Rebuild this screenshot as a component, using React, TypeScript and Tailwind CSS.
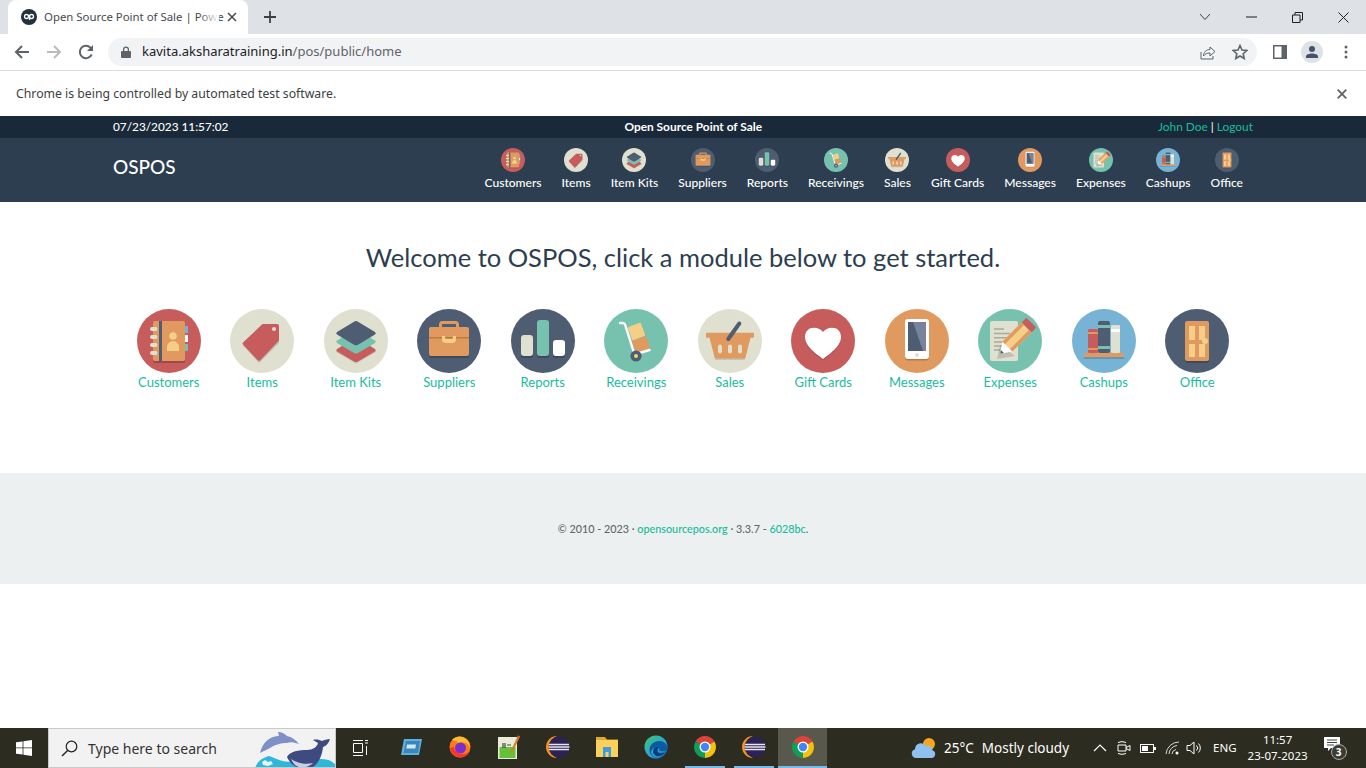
import React from "react";

const R = "#c65c5c", C = "#e0e0d1", N = "#4f5d73", G = "#76c2af", O = "#e0995e", Y = "#f5cf87", B = "#77b3d4", W = "#ffffff";

function Art({ name }: { name: string }) {
  switch (name) {
    case "Customers":
      return (<>
        <circle cx="32" cy="32" r="32" fill={R} />
        <rect x="16" y="14" width="32" height="40" rx="2" fill="#000" opacity=".2" />
        <rect x="48" y="17" width="3" height="7" fill={B} /><rect x="48" y="26" width="3" height="7" fill={W} /><rect x="48" y="35" width="3" height="7" fill={G} />
        <rect x="16" y="12" width="32" height="40" rx="2" fill={O} />
        <rect x="22" y="12" width="3" height="40" fill={N} />
        {[20, 28, 36, 44].map((y) => <rect key={y} x="13" y={y - 2} width="7.5" height="4" rx="2" fill={C} />)}
        <circle cx="36" cy="27" r="3.8" fill={Y} />
        <path d="M30 42v-4a6 6 0 0 1 12 0v4z" fill={Y} />
      </>);
    case "Items":
      return (<>
        <circle cx="32" cy="32" r="32" fill={C} />
        <path d="M31.7 17H49v17L29 54 12.7 36.3z" fill="#000" opacity=".15" />
        <path d="M32.5 15H47a2 2 0 0 1 2 2v14.5L30.5 51a2 2 0 0 1-3 0L13.5 36a2 2 0 0 1 0-3z" fill={R} />
        <circle cx="44" cy="20" r="2" fill={C} />
      </>);
    case "Item Kits":
      return (<>
        <circle cx="32" cy="32" r="32" fill={C} />
        <path d="M32 23 52 43 32 55 12 43z" fill="#000" opacity=".1" />
        <path d="M30 29.5a4 4 0 0 1 4 0l17 10.5a1.5 1.5 0 0 1 0 2.4L34 52.5a4 4 0 0 1-4 0L13 42.4a1.5 1.5 0 0 1 0-2.4z" fill={R} />
        <path d="M30 21a4 4 0 0 1 4 0l17 10.5a1.5 1.5 0 0 1 0 2.4L34 44a4 4 0 0 1-4 0L13 33.9a1.5 1.5 0 0 1 0-2.4z" fill={G} />
        <path d="M30 12.7a4 4 0 0 1 4 0l17 10.4a1.5 1.5 0 0 1 0 2.4L34 35.7a4 4 0 0 1-4 0L13 25.5a1.5 1.5 0 0 1 0-2.4z" fill={N} />
      </>);
    case "Suppliers":
      return (<>
        <circle cx="32" cy="32" r="32" fill={N} />
        <rect x="12" y="20" width="40" height="29" rx="2" fill="#000" opacity=".2" />
        <path d="M23.5 19v-3.5a2 2 0 0 1 2-2h13a2 2 0 0 1 2 2V19" fill="none" stroke={O} strokeWidth="3" />
        <rect x="12" y="18" width="40" height="29" rx="2" fill={O} />
        <rect x="12" y="28" width="40" height="1.5" fill="#b97a45" />
        <path d="M25 27h3v1.5a1.5 1.5 0 0 0 1.5 1.5h5a1.5 1.5 0 0 0 1.5-1.5V27h3v3a4 4 0 0 1-4 4h-6a4 4 0 0 1-4-4z" fill={Y} />
      </>);
    case "Reports":
      return (<>
        <circle cx="32" cy="32" r="32" fill={N} />
        <rect x="10" y="26" width="12" height="23" rx="2" fill="#000" opacity=".2" /><rect x="26" y="13" width="12" height="36" rx="2" fill="#000" opacity=".2" /><rect x="42" y="33" width="12" height="16" rx="2" fill="#000" opacity=".2" />
        <rect x="10" y="26" width="12" height="21" rx="3" fill={C} />
        <rect x="26" y="11" width="12" height="36" rx="3" fill={G} />
        <rect x="42" y="31" width="12" height="16" rx="3" fill={W} />
      </>);
    case "Receivings":
      return (<>
        <circle cx="32" cy="32" r="32" fill={G} />
        <rect x="25.5" y="15.5" width="14" height="14" rx="1" transform="rotate(-20 32.5 22.5)" fill={Y} />
        <rect x="29.5" y="29" width="15" height="14" rx="1" transform="rotate(-20 37 36)" fill={O} />
        <path d="M16 14h2.5q2 0 2.7 2L30.5 45.5 45.5 41" fill="none" stroke={W} strokeWidth="2.4" strokeLinecap="round" strokeLinejoin="round" />
        <circle cx="32" cy="47" r="5.6" fill={N} /><circle cx="32" cy="47" r="2" fill={Y} />
      </>);
    case "Sales":
      return (<>
        <circle cx="32" cy="32" r="32" fill={C} />
        <path d="M13 30h38l-4 21H17z" fill="#000" opacity=".12" />
        <path d="M11.3 28h41.4L47.5 48a2 2 0 0 1-2 1.4h-27a2 2 0 0 1-2-1.4z" fill={O} />
        <rect x="8" y="23.7" width="48" height="5" rx="1" fill={O} />
        {[22, 32, 42].map((x) => <rect key={x} x={x - 2} y="35.5" width="4" height="9" rx="2" fill={C} />)}
        <path d="M30.3 30 41.3 14.5" stroke={N} strokeWidth="4" strokeLinecap="round" />
      </>);
    case "Gift Cards":
      return (<>
        <circle cx="32" cy="32" r="32" fill={R} />
        <path d="M32 51.500C27 47.500 14 39.500 14 29.500 14 23.500 18 20.200 23 20.200 27 20.200 30 22 32 24.500 34 22 37 20.200 41 20.200 46 20.200 50 23.500 50 29.500 50 39.500 37 47.500 32 51.500z" fill="#000" opacity=".12" />
        <path d="M32 50C27 46 14 38 14 28 14 22 18 18.700 23 18.700 27 18.700 30 20.500 32 23 34 20.500 37 18.700 41 18.700 46 18.700 50 22 50 28 50 38 37 46 32 50z" fill={W} />
      </>);
    case "Messages":
      return (<>
        <circle cx="32" cy="32" r="32" fill={O} />
        <rect x="20" y="11" width="24" height="40.500" rx="3" fill="#000" opacity=".2" />
        <rect x="20" y="10" width="24" height="40" rx="3" fill={W} />
        <rect x="23" y="13" width="18" height="29" fill={N} />
        <path d="M28 13h13v29h-3z" fill="#77849b" />
        <circle cx="32" cy="46" r="2" fill={C} />
      </>);
    case "Expenses":
      return (<>
        <circle cx="32" cy="32" r="32" fill={G} />
        <rect x="12" y="12" width="28" height="40" rx="2" fill={C} />
        <path d="M16 20h10M16 24.500h16M16 28.700h16M16 33h12M16 37h8M16 41h6" stroke="#a9a99c" strokeWidth="1.500" />
        <path d="M19 50l18-3L22 36z" fill="#000" opacity=".15" />
        <g transform="rotate(45 35 32)">
          <rect x="28" y="6" width="14" height="7" rx="1.500" fill={R} />
          <rect x="28" y="13" width="14" height="27" fill={Y} />
          <rect x="28" y="13" width="3.500" height="27" fill={O} /><rect x="38.500" y="13" width="3.500" height="27" fill={O} />
          <path d="M28 40h14l-7 10z" fill={W} />
          <path d="M32.900 47h4.200L35 50z" fill={N} />
        </g>
      </>);
    case "Cashups":
      return (<>
        <circle cx="32" cy="32" r="32" fill={B} />
        <rect x="12" y="46" width="40" height="4" fill="#000" opacity=".15" />
        <rect x="16" y="20" width="10" height="24" rx="1.500" fill={R} />
        <rect x="16" y="23" width="10" height="2" fill={O} /><rect x="16" y="39" width="10" height="2" fill={O} />
        <rect x="26" y="12" width="12" height="32" rx="2" fill={N} />
        <rect x="26" y="16" width="12" height="3" fill={G} /><rect x="26" y="37" width="12" height="3" fill={G} />
        <rect x="39" y="16" width="9" height="28" rx="1" fill={C} />
        <rect x="39" y="20" width="9" height="3" fill={W} />
        <rect x="12" y="44" width="40" height="4" fill={O} />
      </>);
    default:
      return (<>
        <circle cx="32" cy="32" r="32" fill={N} />
        <rect x="20" y="14" width="24" height="40" rx="2" fill="#000" opacity=".2" />
        <rect x="20" y="12" width="24" height="40" rx="2" fill={O} />
        <rect x="24" y="17" width="6" height="14" fill={Y} /><rect x="34" y="17" width="6" height="14" fill={Y} />
        <rect x="24" y="35" width="6" height="13" fill={Y} /><rect x="34" y="35" width="6" height="13" fill={Y} />
        <circle cx="40" cy="32" r="3" fill={Y} />
      </>);
  }
}

function ModuleIcon({ name, size }: { name: string; size: number }) {
  return <svg width={size} height={size} viewBox="0 0 64 64" className="block shrink-0"><Art name={name} /></svg>;
}

const modules = ["Customers", "Items", "Item Kits", "Suppliers", "Reports", "Receivings", "Sales", "Gift Cards", "Messages", "Expenses", "Cashups", "Office"];

function TabStrip() {
  return (
    <div className="h-[34px] bg-[#dee1e6] flex items-stretch shrink-0">
      <div className="ml-2 w-[240px] bg-white rounded-t-lg flex items-center pl-[13px] pr-[9px]">
        <svg width="16" height="16" viewBox="0 0 16 16" className="shrink-0">
          <circle cx="8" cy="8" r="8" fill="#24303f" />
          <circle cx="5.500" cy="7.500" r="2" fill="none" stroke="#fff" strokeWidth="1.300" />
          <circle cx="10.500" cy="7.500" r="2" fill="none" stroke="#fff" strokeWidth="1.300" />
          <path d="M8.500 7.500V11" stroke="#fff" strokeWidth="1.300" />
        </svg>
        <div className="ml-[7px] w-[175px] whitespace-nowrap text-[11.400px] text-[#45494f] relative">
          Open Source Point of Sale | Powe
          <div className="absolute right-0 top-0 bottom-0 w-5 bg-gradient-to-r from-transparent to-white" />
        </div>
        <svg width="10" height="10" viewBox="0 0 10 10" className="ml-[8px] shrink-0"><path d="M1 1l8 8M9 1l-8 8" stroke="#45494f" strokeWidth="1.500" /></svg>
      </div>
      <div className="ml-[15px] flex items-center">
        <svg width="14" height="14" viewBox="0 0 14 14"><path d="M7 1v12M1 7h12" stroke="#3c4043" strokeWidth="1.800" /></svg>
      </div>
      <div className="ml-auto flex items-center">
        <div className="w-[46px] flex justify-center"><svg width="12" height="8" viewBox="0 0 12 8"><path d="M1 1l5 5.500L11 1" fill="none" stroke="#3c4043" strokeWidth="1" /></svg></div>
        <div className="w-[46px] flex justify-center"><svg width="11" height="2" viewBox="0 0 11 2"><path d="M0 1h11" stroke="#1f1f1f" strokeWidth="1" /></svg></div>
        <div className="w-[46px] flex justify-center"><svg width="11" height="11" viewBox="0 0 11 11"><path d="M.5 3h7.500v7.500H.5zM3 3V.5h7.500V8H8" fill="none" stroke="#1f1f1f" strokeWidth="1" /></svg></div>
        <div className="w-[46px] flex justify-center"><svg width="11" height="11" viewBox="0 0 11 11"><path d="M.5.5l10 10M10.500.5l-10 10" stroke="#1f1f1f" strokeWidth="1" /></svg></div>
      </div>
    </div>
  );
}

function Toolbar() {
  return (
    <div className="h-[37px] bg-white border-b border-[#dadce0] flex items-center shrink-0 pb-px">
      <div className="w-[108px] flex items-center pl-[14px] gap-[16px] shrink-0">
        <svg width="16" height="16" viewBox="0 0 16 16"><path d="M15 8H2M8 2 2 8l6 6" fill="none" stroke="#5f6368" strokeWidth="2" /></svg>
        <svg width="16" height="16" viewBox="0 0 16 16"><path d="M1 8h13M8 2l6 6-6 6" fill="none" stroke="#b9bbbe" strokeWidth="2" /></svg>
        <svg width="16" height="16" viewBox="0 0 16 16"><path d="M13.700 10.500A6.200 6.200 0 1 1 12.400 3.600L14 5.500" fill="none" stroke="#5f6368" strokeWidth="2" /><path d="M15 1v6H9z" fill="#5f6368" /></svg>
      </div>
      <div className="w-[1149px] h-[28px] bg-[#f1f3f4] rounded-full flex items-center pl-[13px] pr-[8px] shrink-0">
        <svg width="10" height="12" viewBox="0 0 10 12" className="shrink-0"><path d="M2 5V3.500a3 3 0 0 1 6 0V5h1a1 1 0 0 1 1 1v5a1 1 0 0 1-1 1H1a1 1 0 0 1-1-1V6a1 1 0 0 1 1-1zm1.300 0h3.400V3.500a1.700 1.700 0 0 0-3.400 0z" fill="#5f6368" /></svg>
        <div className="ml-[11px] pt-px text-[13px] whitespace-nowrap text-[#5f6368]"><span className="text-[#202124]">kavita.aksharatraining.in</span>/pos/public/home</div>
        <svg width="16" height="16" viewBox="0 0 16 16" className="ml-auto shrink-0"><path d="M1 8v7h12v-3M3.500 12c0-4 3-6.500 6.500-6.500V3l5 4.500-5 4.500V9c-3 0-5 1-6.500 3z" fill="none" stroke="#5f6368" strokeWidth="1" /></svg>
        <svg width="16" height="16" viewBox="0 0 16 16" className="ml-[16px] mr-[1px] shrink-0"><path d="M8 1.500l2 4.500 4.800.5-3.600 3.200 1 4.800L8 12l-4.200 2.500 1-4.800-3.600-3.200L6 6z" fill="none" stroke="#5f6368" strokeWidth="1.600" /></svg>
      </div>
      <div className="flex-1 flex items-center pl-[16px]">
        <svg width="14" height="14" viewBox="0 0 14 14" className="shrink-0"><rect width="14" height="14" fill="#5f6368" /><rect x="1.500" y="1.500" width="7" height="11" fill="#fff" /></svg>
        <div className="ml-[14px] w-[22px] h-[22px] rounded-full bg-[#dee1e6] flex items-center justify-center shrink-0">
          <svg width="14" height="14" viewBox="0 0 14 14"><circle cx="7" cy="4" r="3" fill="#45526a" /><path d="M1 13v-1.500C1 9.500 4 8.500 7 8.500s6 1 6 3V13z" fill="#45526a" /></svg>
        </div>
        <svg width="4" height="14" viewBox="0 0 4 14" className="ml-[21px] shrink-0"><circle cx="2" cy="2" r="1.500" fill="#5f6368" /><circle cx="2" cy="7" r="1.500" fill="#5f6368" /><circle cx="2" cy="12" r="1.500" fill="#5f6368" /></svg>
      </div>
    </div>
  );
}

function InfoBar() {
  return (
    <div className="h-[45px] bg-white flex items-center justify-between pl-4 pr-[19px] shrink-0 text-[12.250px] text-[#3c4043]">
      <span className="pt-[2px]">Chrome is being controlled by automated test software.</span>
      <svg width="10" height="10" viewBox="0 0 10 10"><path d="M.7.7l8.600 8.600M9.300.7.700 9.300" stroke="#5f6368" strokeWidth="1.800" /></svg>
    </div>
  );
}

function Ospos() {
  return (
    <div className="flex-1 flex flex-col min-h-0" style={{ fontFamily: "Lato, sans-serif" }}>
      <div className="h-[22px] bg-[#1a2939] shrink-0 flex items-center justify-between px-[113px] text-[11.900px] text-white">
        <span className="font-medium text-[11.800px]">07/23/2023 11:57:02</span>
        <span className="font-bold">Open Source Point of Sale</span>
        <span className="text-[#18bc9c]">John Doe <span className="text-white">|</span> Logout</span>
      </div>
      <div className="h-[64px] bg-[#2c3e50] shrink-0 flex items-center justify-between pl-[113px] pr-[113px] text-white">
        <span className="text-[19px] font-medium relative -top-[3px]">OSPOS</span>
        <div className="flex self-start pt-[10px]">
          {modules.map((m) => (
            <div key={m} className="px-[10px] flex flex-col items-center text-[12.050px] leading-[15px] font-medium">
              <ModuleIcon name={m} size={24} />
              <span className="mt-[3px]">{m}</span>
            </div>
          ))}
        </div>
      </div>
      <h1 className="mt-[37px] text-center text-[25.500px] leading-[36px] text-[#2c3e50] font-normal">Welcome to OSPOS, click a module below to get started.</h1>
      <div className="mt-[34px] flex justify-center">
        {modules.map((m) => (
          <div key={m} className="w-[93.500px] flex flex-col items-center text-[13px] leading-[18px] text-[#18bc9c]">
            <ModuleIcon name={m} size={64} />
            <span>{m}</span>
          </div>
        ))}
      </div>
      <div className="mt-[82px] h-[111px] bg-[#ecf0f1] shrink-0 flex items-center justify-center pt-[2px] text-[10.800px] font-medium text-[#666]">
        <span>© 2010 - 2023 · <span className="text-[#18bc9c]">opensourcepos.org</span> · 3.3.7 - <span className="text-[#18bc9c]">6028bc</span>.</span>
      </div>
    </div>
  );
}

function Chrome() {
  return (
    <svg width="24" height="24" viewBox="0 0 24 24">
      <path d="M12 12 2.500 6.500A11 11 0 0 1 21.500 6.500z" fill="#db4437" />
      <path d="M12 12 21.500 6.500A11 11 0 0 1 12 23z" fill="#f4c20d" />
      <path d="M12 12 12 23A11 11 0 0 1 2.500 6.500z" fill="#0f9d58" />
      <circle cx="12" cy="12" r="5.500" fill="#fff" />
      <circle cx="12" cy="12" r="4.200" fill="#4285f4" />
    </svg>
  );
}

function Eclipse() {
  return (
    <svg width="24" height="24" viewBox="0 0 24 24">
      <path d="M11 1a11 11 0 0 0 0 22 12 12 0 0 1 0-22z" fill="#f7941e" />
      <circle cx="13" cy="12" r="10.500" fill="#2c2255" />
      <path d="M3 9.500h20M2.500 12h21M3 14.500h20" stroke="#e8e6f2" strokeWidth="1.300" />
    </svg>
  );
}

function TaskSlot({ children, active, line }: { children?: React.ReactNode; active?: boolean; line?: boolean }) {
  return (
    <div className={`w-[49px] h-full flex flex-col items-center shrink-0 ${active ? "bg-[#58584c]" : ""}`}>
      <div className="flex-1 flex items-center justify-center">{children}</div>
      <div className={`h-[2px] ${active ? "w-full bg-[#76b9ed]" : line ? "w-[40px] bg-[#76b9ed]" : "w-full"}`} />
    </div>
  );
}

function Taskbar() {
  return (
    <div className="h-[40px] bg-[#2c2c21] flex items-stretch text-white shrink-0" style={{ fontFamily: '"Noto Sans", sans-serif' }}>
      <div className="w-[48px] flex items-center justify-center shrink-0">
        <svg width="16" height="16" viewBox="0 0 16 16"><path d="M0 2.300 6.600 1.400V7.500H0zM7.400 1.300 16 0v7.500H7.400zM0 8.300h6.600v6.300L0 13.700zM7.400 8.300H16V16l-8.600-1.300z" fill="#fff" /></svg>
      </div>
      <div className="w-[288px] bg-[#f2f2f2] border border-[#c9c9c9] flex items-center pl-[12px] relative overflow-hidden shrink-0">
        <svg width="17" height="17" viewBox="0 0 17 17" className="shrink-0"><circle cx="10.500" cy="6.500" r="5.300" fill="none" stroke="#222" strokeWidth="1.200" /><path d="M6.600 10.400 1 16" stroke="#222" strokeWidth="1.400" /></svg>
        <span className="ml-[10px] text-[14px] text-[#333]">Type here to search</span>
        <svg width="80" height="39" viewBox="0 0 80 39" className="absolute right-0 top-0">
          <path d="M0 39c3-8 8-10 14-12 8 3 14 6 22 6s20-3 30-3 12 4 14 5v4z" fill="#2fb6d9" />
          <path d="M5 24C8 12 16 7 24 7l-1-4c4 0 7 2 9 4 5 1 9 4 12 8-6-2-9-2-12-1-6 0-13 2-17 5-3 2-7 3-10 5z" fill="#7f90c8" />
          <path d="M32 28c3-6 12-7 20-7 6 0 10-3 11-7l-5-3c3-1 7 0 9 1 2-1 5-2 8-2-1 4-4 7-7 8-1 10-6 22-18 22-8 0-15-5-18-12z" fill="#3f4b80" />
          <path d="M36 30c6 4 14 6 22 4-4 4-9 5-14 4-4-1-6-4-8-8z" fill="#c9cde6" />
          <path d="M7 33l3-2 3 2 3-1 2 3-5 2-5-1z" fill="#e4f6fb" />
        </svg>
      </div>
      <div className="w-[50px] flex items-center justify-center pr-[2px] shrink-0">
        <svg width="16" height="16" viewBox="0 0 16 16"><path d="M1 .500h10M1 15.500h10M1.500 3.500h9v9h-9zM13 .500h3M13 3h3M14.500 6v9" fill="none" stroke="#fff" strokeWidth="1" /></svg>
      </div>
      <TaskSlot>
        <svg width="24" height="18" viewBox="0 0 24 18"><path d="M5 1h18l-3 16H2z" fill="#5fb2e0" /><path d="M7 3h14l-2 12H4.500z" fill="#3a86bd" /><path d="M8 6.500h9l-.6 4H7.300z" fill="#cfe9f7" /></svg>
      </TaskSlot>
      <TaskSlot>
        <svg width="22" height="22" viewBox="0 0 22 22"><circle cx="11" cy="11" r="10.500" fill="#ff7a1a" /><path d="M3 4c3-4 10-5 14-1 3 2 4 6 4 9-1-3-3-5-5-5l-3-1-3 1-3-2z" fill="#ffbd30" /><circle cx="11.500" cy="12" r="5.500" fill="#7b2fd0" /><path d="M1 12c1 6 6 9.500 10 9.500s8-2 10-7c-2 3-6 4-9 3.500S5 15 5 11z" fill="#f6372c" /></svg>
      </TaskSlot>
      <TaskSlot>
        <svg width="24" height="24" viewBox="0 0 24 24"><rect x="1" y="2" width="19" height="22" fill="#e9ecd8" /><rect x="2.500" y="12" width="16" height="11" fill="#63c23a" /><path d="M6 8v5M8 8v5M10 10h4" stroke="#444" strokeWidth="1.200" /><path d="M22 1 14 18" stroke="#c7852e" strokeWidth="2.200" /><path d="M22 1l-1 2" stroke="#e84d3c" strokeWidth="2.200" /></svg>
      </TaskSlot>
      <TaskSlot><Eclipse /></TaskSlot>
      <TaskSlot>
        <svg width="22" height="20" viewBox="0 0 22 20"><path d="M0 0h9l2 2.500h11V4H0z" fill="#e0a82e" /><rect y="3" width="22" height="17" fill="#fbd15c" /><path d="M7 10h8v10h-2.500v-5h-3v5H7z" fill="#3d9be0" /></svg>
      </TaskSlot>
      <TaskSlot>
        <svg width="24" height="24" viewBox="0 0 24 24">
          <defs><linearGradient id="edg" x1="0" y1="0" x2="1" y2="1"><stop offset="0" stopColor="#3fc56e" /><stop offset=".6" stopColor="#2aa5d8" /><stop offset="1" stopColor="#114f9e" /></linearGradient></defs>
          <circle cx="12" cy="12" r="11.500" fill="url(#edg)" />
          <path d="M23.500 13c0-4-4-7-8-7-6 0-10 4-10 9 0 4 3 8 8 8.500-5-1-7-5-6-8 1-2 3-3 5-3 3 0 3 2 2.500 3 3 1 8.500 1 8.500-2.500z" fill="#0c59a4" />
          <path d="M14 12c-3 0-5 2-5 4.500 0 3 3 5 6 4.500 3-.5 5-2 6-4-3 2-7 1.500-7.500-1-.2-1 .5-2 1-3z" fill="#0a3d7d" />
        </svg>
      </TaskSlot>
      <TaskSlot line><Chrome /></TaskSlot>
      <TaskSlot line><Eclipse /></TaskSlot>
      <TaskSlot active><Chrome /></TaskSlot>
      <div className="flex-1 flex items-center pl-[84px] text-[13.500px] whitespace-nowrap">
        <svg width="26" height="22" viewBox="0 0 26 22" className="shrink-0"><circle cx="18" cy="7" r="6" fill="#f5a623" /><path d="M5 21a4.500 4.500 0 0 1-1-8.800A6 6 0 0 1 15 9a5 5 0 0 1 6.500 4.300A4 4 0 0 1 21 21z" fill="#8fc1ee" /></svg>
        <span className="ml-[7px]">25°C</span>
        <span className="ml-[8px]">Mostly cloudy</span>
        <svg width="14" height="8" viewBox="0 0 14 8" className="ml-[24px] shrink-0"><path d="M1 7l6-6 6 6" fill="none" stroke="#fff" strokeWidth="1.200" /></svg>
        <svg width="16" height="16" viewBox="0 0 16 16" className="ml-[9px] shrink-0"><path d="M2 2.500a6 3 0 0 1 8 0M2 13.500a6 3 0 0 0 8 0M2 5h8v6H2zM10 7.500l4-2v5l-4-2" fill="none" stroke="#fff" strokeWidth="1" /></svg>
        <svg width="16" height="9" viewBox="0 0 16 9" className="ml-[8px] shrink-0"><rect x=".5" y=".5" width="13" height="8" fill="none" stroke="#fff" /><rect x="2" y="2" width="6" height="5" fill="#fff" /><rect x="14" y="3" width="2" height="3" fill="#fff" /></svg>
        <svg width="16" height="14" viewBox="0 0 16 14" className="ml-[9px] shrink-0"><path d="M1 13A13 13 0 0 1 14 1M4 13a9 9 0 0 1 8-8.500M7 13a5 5 0 0 1 4-4.500" fill="none" stroke="#d8d8d8" strokeWidth="1" /><circle cx="12" cy="12" r="1.500" fill="#fff" /></svg>
        <svg width="16" height="14" viewBox="0 0 16 14" className="ml-[5px] shrink-0"><path d="M1 4.500h3L8 1v12L4 9.500H1zM10.500 4.500a3.500 3.500 0 0 1 0 5M12.500 2.500a6.500 6.500 0 0 1 0 9" fill="none" stroke="#fff" strokeWidth="1" /></svg>
        <span className="ml-[11px] text-[11.500px]">ENG</span>
        <div className="ml-[11px] w-[60px] flex flex-col items-center text-[11.500px] leading-[16px]">
          <span>11:57</span>
          <span>23-07-2023</span>
        </div>
        <div className="ml-[16px] relative w-[24px] h-[24px] shrink-0">
          <svg width="16" height="15" viewBox="0 0 16 15" className="absolute left-0 top-[1px]"><path d="M0 0h16v11H7l-3 3v-3H0z" fill="#fff" /><path d="M3 3h10M3 5.500h10M3 8h7" stroke="#444" strokeWidth="1" /></svg>
          <span className="absolute left-[7px] top-[8px] w-[16px] h-[16px] rounded-full bg-[#3c3c36] border border-[#aaa] text-[10px] leading-[14px] text-center font-bold">3</span>
        </div>
      </div>
    </div>
  );
}

export default function App() {
  return (
    <div className="w-[1366px] h-[768px] overflow-hidden flex flex-col bg-white" style={{ fontFamily: '"Noto Sans", sans-serif' }}>
      <TabStrip />
      <Toolbar />
      <InfoBar />
      <Ospos />
      <Taskbar />
    </div>
  );
}
